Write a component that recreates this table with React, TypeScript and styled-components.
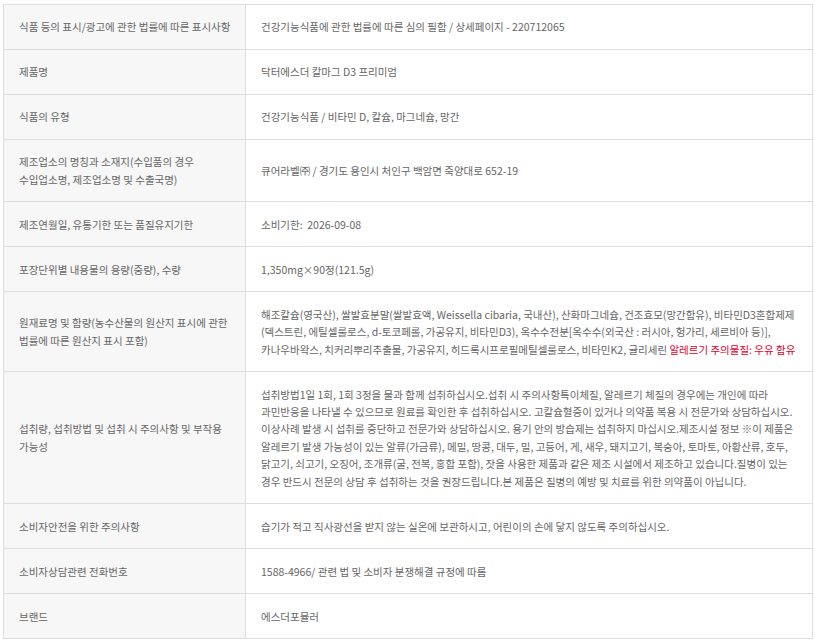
import React from "react";
import styled, { createGlobalStyle } from "styled-components";

const GlobalStyle = createGlobalStyle`
  html, body {
    margin: 0;
    padding: 0;
    background: #ffffff;
  }
  body {
    font-family: "Noto Sans CJK KR", "Noto Sans", sans-serif;
  }
`;

const Page = styled.div`
  padding: 4px 0 0 3px;
`;

const InfoTable = styled.table`
  width: 809px;
  border-collapse: collapse;
  table-layout: fixed;
  font-family: "Noto Sans CJK KR", "Noto Sans", sans-serif;
  font-size: 10.5px;
  letter-spacing: 0;
  line-height: 17.4px;
  color: #666666;
`;

const LabelCol = styled.col`
  width: 242px;
`;

const ValueCol = styled.col`
  width: 567px;
`;

const Row = styled.tr``;

const LabelCell = styled.th`
  background: #f7f7f7;
  border: 1px solid #dddddd;
  padding: 13.3px 15px;
  text-align: left;
  font-weight: 400;
  vertical-align: middle;
  white-space: nowrap;
`;

const ValueCell = styled.td`
  background: #ffffff;
  border: 1px solid #dddddd;
  padding: 13.3px 15px;
  text-align: left;
  vertical-align: middle;
  white-space: nowrap;
`;

const Allergy = styled.span`
  color: #e4002b;
`;

type Item = { label: React.ReactNode; value: React.ReactNode };

const items: Item[] = [
  {
    label: "식품 등의 표시/광고에 관한 법률에 따른 표시사항",
    value: "건강기능식품에 관한 법률에 따른 심의 필함 / 상세페이지 - 220712065",
  },
  { label: "제품명", value: "닥터에스더 칼마그 D3 프리미엄" },
  { label: "식품의 유형", value: "건강기능식품 / 비타민 D, 칼슘, 마그네슘, 망간" },
  {
    label: (
      <>
        제조업소의 명칭과 소재지(수입품의 경우
        <br />
        수입업소명, 제조업소명 및 수출국명)
      </>
    ),
    value: "큐어라벨㈜ / 경기도 용인시 처인구 백암면 죽양대로 652-19",
  },
  {
    label: "제조연월일, 유통기한 또는 품질유지기한",
    value: "소비기한:\u00a0 2026-09-08",
  },
  {
    label: "포장단위별 내용물의 용량(중량), 수량",
    value: "1,350mg×90정(121.5g)",
  },
  {
    label: (
      <>
        원재료명 및 함량(농수산물의 원산지 표시에 관한
        <br />
        법률에 따른 원산지 표시 포함)
      </>
    ),
    value: (
      <>
        해조칼슘(영국산), 쌀발효분말(쌀발효액, Weissella cibaria, 국내산), 산화마그네슘, 건조효모(망간함유), 비타민D3혼합제제
        <br />
        (덱스트린, 에틸셀룰로스, d-토코페롤, 가공유지, 비타민D3), 옥수수전분[옥수수(외국산 : 러시아, 헝가리, 세르비아 등)],
        <br />
        카나우바왁스, 치커리뿌리추출물, 가공유지, 히드록시프로필메틸셀룰로스, 비타민K2, 글리세린{" "}
        <Allergy>알레르기 주의물질: 우유 함유</Allergy>
      </>
    ),
  },
  {
    label: (
      <>
        섭취량, 섭취방법 및 섭취 시 주의사항 및 부작용
        <br />
        가능성
      </>
    ),
    value: (
      <>
        섭취방법1일 1회, 1회 3정을 물과 함께 섭취하십시오.섭취 시 주의사항특이체질, 알레르기 체질의 경우에는 개인에 따라
        <br />
        과민반응을 나타낼 수 있으므로 원료를 확인한 후 섭취하십시오. 고칼슘혈증이 있거나 의약품 복용 시 전문가와 상담하십시오.
        <br />
        이상사례 발생 시 섭취를 중단하고 전문가와 상담하십시오. 용기 안의 방습제는 섭취하지 마십시오.제조시설 정보 ※이 제품은
        <br />
        알레르기 발생 가능성이 있는 알류(가금류), 메밀, 땅콩, 대두, 밀, 고등어, 게, 새우, 돼지고기, 복숭아, 토마토, 아황산류, 호두,
        <br />
        닭고기, 쇠고기, 오징어, 조개류(굴, 전복, 홍합 포함), 잣을 사용한 제품과 같은 제조 시설에서 제조하고 있습니다.질병이 있는
        <br />
        경우 반드시 전문의 상담 후 섭취하는 것을 권장드립니다.본 제품은 질병의 예방 및 치료를 위한 의약품이 아닙니다.
      </>
    ),
  },
  {
    label: "소비자안전을 위한 주의사항",
    value: "습기가 적고 직사광선을 받지 않는 실온에 보관하시고, 어린이의 손에 닿지 않도록 주의하십시오.",
  },
  {
    label: "소비자상담관련 전화번호",
    value: "1588-4966/ 관련 법 및 소비자 분쟁해결 규정에 따름",
  },
  { label: "브랜드", value: "에스더포뮬러" },
];

export default function App() {
  return (
    <>
      <GlobalStyle />
      <Page>
        <InfoTable>
          <colgroup>
            <LabelCol />
            <ValueCol />
          </colgroup>
          <tbody>
            {items.map((item, i) => (
              <Row key={i}>
                <LabelCell scope="row">{item.label}</LabelCell>
                <ValueCell>{item.value}</ValueCell>
              </Row>
            ))}
          </tbody>
        </InfoTable>
      </Page>
    </>
  );
}
